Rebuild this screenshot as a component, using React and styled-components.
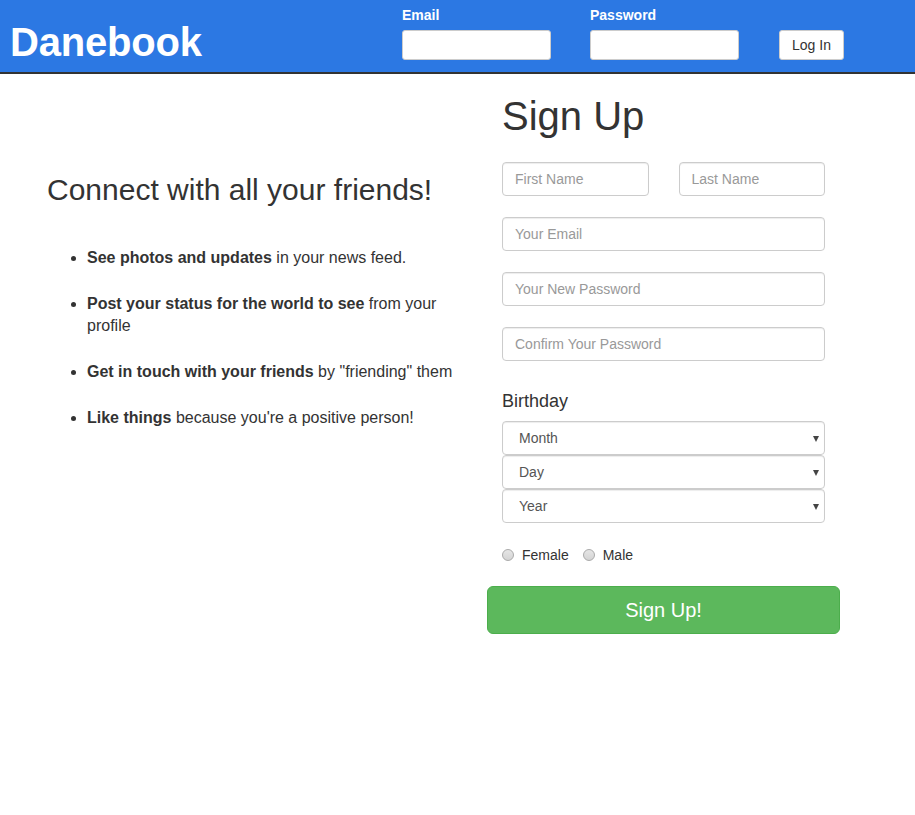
import styled, { createGlobalStyle } from "styled-components";

const GlobalStyle = createGlobalStyle`
  * {
    box-sizing: border-box;
  }
  body {
    margin: 0;
    font-family: "Liberation Sans", Helvetica, Arial, sans-serif;
    font-size: 16px;
    line-height: 1.42857;
    color: #333;
    background: #fff;
  }
`;

const Header = styled.header`
  display: flex;
  align-items: flex-start;
  height: 74px;
  padding: 5px 0 0 10px;
  background-color: #2c78e3;
  border-bottom: 2px solid #333;
`;

const Logo = styled.h1`
  flex: 0 0 392px;
  margin: 17px 0 0;
  font-size: 40px;
  line-height: 1;
  font-weight: bold;
  letter-spacing: -0.2px;
  color: #fff;
`;

const LoginField = styled.div`
  display: flex;
  flex-direction: column;
  width: 149px;
  margin-right: ${(p) => p.gap || 39}px;
`;

const LoginLabel = styled.label`
  height: 20px;
  margin-bottom: 5px;
  font-size: 14px;
  line-height: 20px;
  font-weight: bold;
  color: #fff;
`;

const LoginInput = styled.input`
  height: 30px;
  border: 1px solid #ccc;
  border-radius: 3px;
  background: #fff;
  padding: 4px 8px;
  font: inherit;
  font-size: 14px;
`;

const LoginButton = styled.button`
  margin-top: 25px;
  width: 65px;
  height: 30px;
  background: #fff;
  border: 1px solid #ccc;
  border-radius: 3px;
  font-family: inherit;
  font-size: 14px;
  color: #333;
  padding: 0;
`;

const Main = styled.main`
  display: flex;
  align-items: flex-start;
`;

const Intro = styled.section`
  flex: 0 0 487px;
  padding: 99px 17px 0 47px;
`;

const IntroTitle = styled.h2`
  margin: 0;
  font-size: 30px;
  line-height: 1.1;
  font-weight: normal;
`;

const Features = styled.ul`
  margin: 41px 0 0;
  padding-left: 40px;
`;

const Feature = styled.li`
  font-size: 16px;
  line-height: 22px;
  margin-bottom: 24px;
`;

const Form = styled.form`
  flex: 0 0 353px;
  display: flex;
  flex-direction: column;
  padding-top: 20px;
`;

const Field = styled.div`
  padding: 0 15px;
  margin-bottom: ${(p) => (p.mb !== undefined ? p.mb : 21)}px;
`;

const Title = styled.h1`
  margin: 0 0 24px;
  font-size: 40px;
  line-height: 1.1;
  font-weight: normal;
`;

const NameRow = styled(Field)`
  display: grid;
  grid-template-columns: 1fr 1fr;
  column-gap: 30px;
`;

const TextInput = styled.input`
  display: block;
  width: 100%;
  height: 34px;
  padding: 6px 12px;
  font-family: inherit;
  font-size: 14px;
  color: #555;
  background: #fff;
  border: 1px solid #ccc;
  border-radius: 4px;
  box-shadow: inset 0 1px 1px rgba(0, 0, 0, 0.075);

  &::placeholder {
    color: #999;
  }
`;

const GroupLabel = styled.div`
  margin: 30px 0 10px;
  font-size: 18px;
  line-height: 20px;
`;

const SelectWrap = styled.div`
  position: relative;

  &::after {
    content: "";
    position: absolute;
    right: 6px;
    top: 15px;
    border-left: 3.5px solid transparent;
    border-right: 3.5px solid transparent;
    border-top: 6px solid #444;
    pointer-events: none;
  }
`;

const Select = styled.select`
  appearance: none;
  display: block;
  width: 100%;
  height: 34px;
  padding: 0 16px;
  font-family: inherit;
  font-size: 14px;
  color: #555;
  background: #fff;
  border: 1px solid #ccc;
  border-radius: 4px;
  box-shadow: inset 0 1px 1px rgba(0, 0, 0, 0.075);
`;

const RadioRow = styled.div`
  display: flex;
  align-items: center;
  margin: 21px 0 20px;
  padding: 0 15px;
  font-size: 14px;
  line-height: 22px;
`;

const RadioLabel = styled.label`
  display: flex;
  align-items: center;
  margin-right: 14px;
`;

const Radio = styled.input`
  appearance: none;
  width: 12px;
  height: 12px;
  margin: 0 8px 0 0;
  border: 1px solid #aaa;
  border-radius: 50%;
  background: linear-gradient(#e6e6e6, #d4d4d4);
`;

const SubmitButton = styled.button`
  height: 48px;
  background-color: #5cb85c;
  border: 1px solid #4cae4c;
  border-radius: 6px;
  color: #fff;
  font-family: inherit;
  font-size: 20px;
`;

const features = [
  ["See photos and updates", " in your news feed."],
  ["Post your status for the world to see", " from your profile"],
  ["Get in touch with your friends", ' by "friending" them'],
  ["Like things", " because you're a positive person!"],
];

function App() {
  return (
    <>
      <GlobalStyle />
      <Header>
        <Logo>Danebook</Logo>
        <LoginField>
          <LoginLabel>Email</LoginLabel>
          <LoginInput type="email" />
        </LoginField>
        <LoginField gap={40}>
          <LoginLabel>Password</LoginLabel>
          <LoginInput type="password" />
        </LoginField>
        <LoginButton type="button">Log In</LoginButton>
      </Header>
      <Main>
        <Intro>
          <IntroTitle>Connect with all your friends!</IntroTitle>
          <Features>
            {features.map(([bold, rest]) => (
              <Feature key={bold}>
                <strong>{bold}</strong>
                {rest}
              </Feature>
            ))}
          </Features>
        </Intro>
        <Form onSubmit={(e) => e.preventDefault()}>
          <Field mb={0}>
            <Title>Sign Up</Title>
          </Field>
          <NameRow>
            <TextInput placeholder="First Name" />
            <TextInput placeholder="Last Name" />
          </NameRow>
          <Field>
            <TextInput placeholder="Your Email" />
          </Field>
          <Field>
            <TextInput type="password" placeholder="Your New Password" />
          </Field>
          <Field mb={0}>
            <TextInput type="password" placeholder="Confirm Your Password" />
          </Field>
          <Field mb={0}>
            <GroupLabel>Birthday</GroupLabel>
            <SelectWrap>
              <Select defaultValue="">
                <option value="">Month</option>
              </Select>
            </SelectWrap>
            <SelectWrap>
              <Select defaultValue="">
                <option value="">Day</option>
              </Select>
            </SelectWrap>
            <SelectWrap>
              <Select defaultValue="">
                <option value="">Year</option>
              </Select>
            </SelectWrap>
          </Field>
          <RadioRow>
            <RadioLabel>
              <Radio type="radio" name="gender" />
              Female
            </RadioLabel>
            <RadioLabel>
              <Radio type="radio" name="gender" />
              Male
            </RadioLabel>
          </RadioRow>
          <SubmitButton type="submit">Sign Up!</SubmitButton>
        </Form>
      </Main>
    </>
  );
}

export default App;
